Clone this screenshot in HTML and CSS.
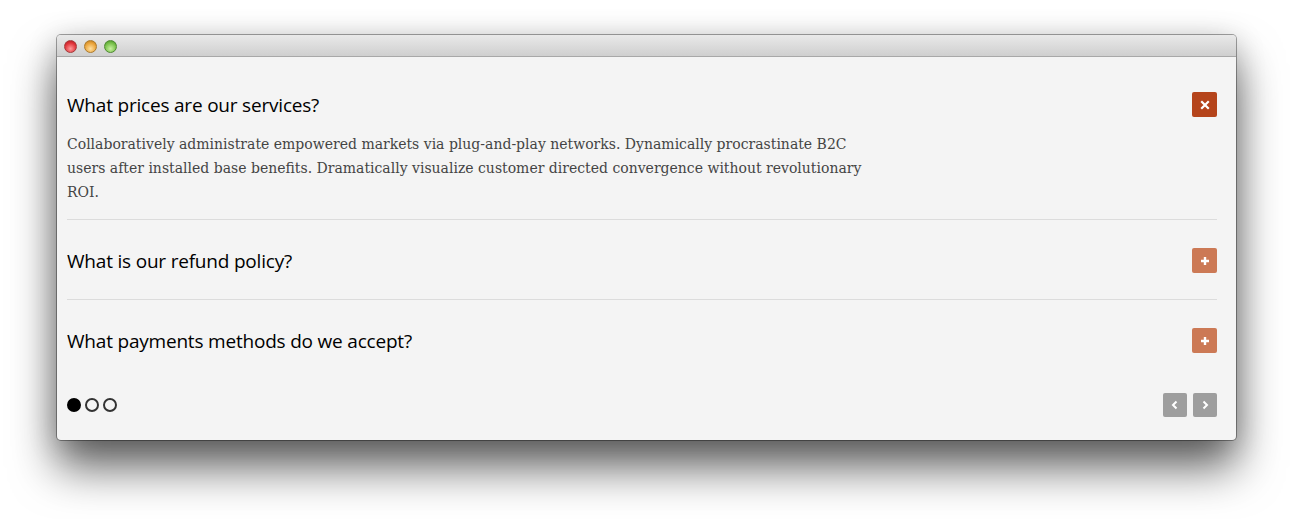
FILE: index.html
```html
<!DOCTYPE html>
<html>
<head>
<meta charset="utf-8">
<link rel="stylesheet" href="styles.css">
</head>
<body>
<div class="window">
  <div class="titlebar">
    <span class="light red"></span>
    <span class="light yellow"></span>
    <span class="light green"></span>
  </div>
  <div class="content">
    <div class="item open">
      <div class="q">
        <h2>What prices are our services?</h2>
        <span class="tog active">
          <svg width="10" height="10" viewBox="0 0 10 10"><path d="M2 2L8 8M8 2L2 8" stroke="#fff" stroke-width="2.2" stroke-linecap="square"/></svg>
        </span>
      </div>
      <p class="a">Collaboratively administrate empowered markets via plug-and-play networks. Dynamically procrastinate B2C users after installed base benefits. Dramatically visualize customer directed convergence without revolutionary ROI.</p>
    </div>
    <div class="item">
      <div class="q">
        <h2>What is our refund policy?</h2>
        <span class="tog">
          <svg width="10" height="10" viewBox="0 0 10 10"><path d="M5 1V9M1 5H9" stroke="#fff" stroke-width="2.4"/></svg>
        </span>
      </div>
    </div>
    <div class="item last">
      <div class="q">
        <h2>What payments methods do we accept?</h2>
        <span class="tog">
          <svg width="10" height="10" viewBox="0 0 10 10"><path d="M5 1V9M1 5H9" stroke="#fff" stroke-width="2.4"/></svg>
        </span>
      </div>
    </div>
    <div class="footer">
      <div class="dots">
        <span class="dot on"></span>
        <span class="dot"></span>
        <span class="dot"></span>
      </div>
      <div class="nav">
        <span class="navbtn"><svg width="8" height="10" viewBox="0 0 8 10"><path d="M5.5 1.5L2 5L5.5 8.5" stroke="#fff" stroke-width="2" fill="none"/></svg></span>
        <span class="navbtn"><svg width="8" height="10" viewBox="0 0 8 10"><path d="M2.5 1.5L6 5L2.5 8.5" stroke="#fff" stroke-width="2" fill="none"/></svg></span>
      </div>
    </div>
  </div>
</div>
</body>
</html>
```
FILE: styles.css
```css
html, body {
  margin: 0;
  padding: 0;
  background: #fff;
}
body {
  padding: 35px 57px 79px 57px;
  width: 1179px;
}
.window {
  width: 1179px;
  background: #f4f4f4;
  border-radius: 4px;
  box-shadow: 0 0 0 1px rgba(0,0,0,0.35), 0 28px 45px rgba(0,0,0,0.6), 0 5px 30px rgba(0,0,0,0.2);
  overflow: hidden;
}
.titlebar {
  height: 22px;
  background: linear-gradient(#e9e9e9, #cfcfcf);
  border-bottom: 1px solid #a8a8a8;
  box-sizing: border-box;
  display: flex;
  align-items: center;
  gap: 7px;
  padding-left: 7px;
  padding-top: 1px;
}
.light {
  width: 13px;
  height: 13px;
  border-radius: 50%;
  box-sizing: border-box;
}
.red { background: radial-gradient(circle at 50% 70%, #ff9a9a, #e0333a 60%, #a8151c); border: 1px solid #a43a3a; }
.yellow { background: radial-gradient(circle at 50% 70%, #ffe0a0, #eaa33a 60%, #b27418); border: 1px solid #ad7b2c; }
.green { background: radial-gradient(circle at 50% 70%, #c8f0a0, #78c04a 60%, #3f8a1f); border: 1px solid #4f8a32; }
.content {
  padding: 0 19px 0 10px;
}
.item {
  border-bottom: 1px solid #dcdcdc;
  padding: 28px 0 26px;
}
.item.open { padding-top: 35px; padding-bottom: 15px; }
.item.last { border-bottom: none; padding-bottom: 0; }
.q {
  display: flex;
  align-items: center;
  justify-content: space-between;
  height: 25px;
}
h2 {
  margin: 0;
  font-family: "Open Sans", "Noto Sans", sans-serif;
  font-weight: 400;
  font-size: 19px;
  color: #000;
  letter-spacing: -0.2px;
}
.tog {
  width: 25px;
  height: 25px;
  border-radius: 2px;
  background: #cc7955;
  display: flex;
  align-items: center;
  justify-content: center;
}
.tog.active { background: #b5441b; }
.a {
  margin: 15px 0 0;
  max-width: 800px;
  font-family: "DejaVu Serif", serif;
  font-size: 14px;
  line-height: 24px;
  color: #444;
}
.footer {
  display: flex;
  justify-content: space-between;
  align-items: center;
  padding: 40px 0 23px;
}
.dots { display: flex; gap: 4px; }
.dot {
  width: 14px;
  height: 14px;
  border-radius: 50%;
  box-sizing: border-box;
  border: 2px solid #333;
}
.dot.on { background: #000; border-color: #000; }
.nav { display: flex; gap: 6px; }
.navbtn {
  width: 24px;
  height: 24px;
  background: #9e9e9e;
  border-radius: 2px;
  display: flex;
  align-items: center;
  justify-content: center;
}
```
